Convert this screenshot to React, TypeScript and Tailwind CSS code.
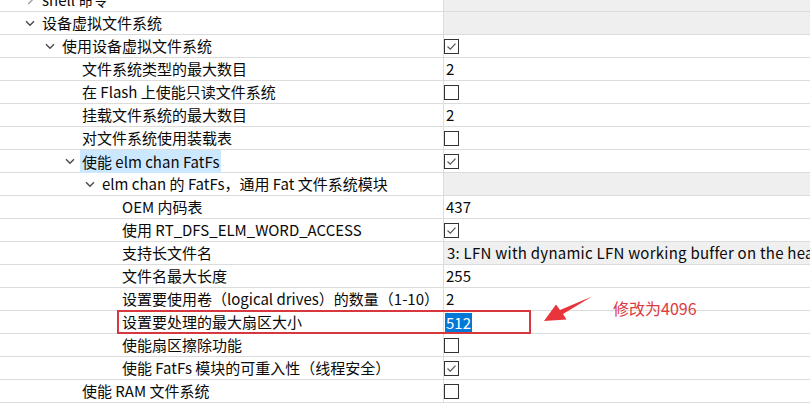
import React from 'react';

type Value =
  | { kind: 'check'; checked: boolean }
  | { kind: 'text'; text: string }
  | { kind: 'category' }
  | { kind: 'combo'; text: string }
  | { kind: 'selected'; text: string };

type Row = {
  label: string;
  level: 1 | 2 | 3 | 4 | 5;
  expander?: 'open' | 'closed';
  highlight?: boolean;
  value: Value;
};

const rows: Row[] = [
  { label: 'shell 命令', level: 1, expander: 'closed', value: { kind: 'category' } },
  { label: '设备虚拟文件系统', level: 1, expander: 'open', value: { kind: 'category' } },
  { label: '使用设备虚拟文件系统', level: 2, expander: 'open', value: { kind: 'check', checked: true } },
  { label: '文件系统类型的最大数目', level: 3, value: { kind: 'text', text: '2' } },
  { label: '在 Flash 上使能只读文件系统', level: 3, value: { kind: 'check', checked: false } },
  { label: '挂载文件系统的最大数目', level: 3, value: { kind: 'text', text: '2' } },
  { label: '对文件系统使用装载表', level: 3, value: { kind: 'check', checked: false } },
  { label: '使能 elm chan FatFs', level: 3, expander: 'open', highlight: true, value: { kind: 'check', checked: true } },
  { label: 'elm chan 的 FatFs，通用 Fat 文件系统模块', level: 4, expander: 'open', value: { kind: 'category' } },
  { label: 'OEM 内码表', level: 5, value: { kind: 'text', text: '437' } },
  { label: '使用 RT_DFS_ELM_WORD_ACCESS', level: 5, value: { kind: 'check', checked: true } },
  { label: '支持长文件名', level: 5, value: { kind: 'combo', text: '3: LFN with dynamic LFN working buffer on the heap' } },
  { label: '文件名最大长度', level: 5, value: { kind: 'text', text: '255' } },
  { label: '设置要使用卷（logical drives）的数量（1-10）', level: 5, value: { kind: 'text', text: '2' } },
  { label: '设置要处理的最大扇区大小', level: 5, value: { kind: 'selected', text: '512' } },
  { label: '使能扇区擦除功能', level: 5, value: { kind: 'check', checked: false } },
  { label: '使能 FatFs 模块的可重入性（线程安全）', level: 5, value: { kind: 'check', checked: true } },
  { label: '使能 RAM 文件系统', level: 3, value: { kind: 'check', checked: false } },
];

const indent: Record<number, string> = {
  1: 'pl-[22px]',
  2: 'pl-[42px]',
  3: 'pl-[62px]',
  4: 'pl-[82px]',
  5: 'pl-[102px]',
};

function Chevron({ open }: { open: boolean }) {
  return open ? (
    <svg width="10" height="7" viewBox="0 0 10 7" className="ml-[3px]">
      <path d="M1 1.2 L5 5.2 L9 1.2" fill="none" stroke="#4a4a4a" strokeWidth="1.4" />
    </svg>
  ) : (
    <svg width="7" height="10" viewBox="0 0 7 10" className="ml-[5px]">
      <path d="M1.2 1 L5.2 5 L1.2 9" fill="none" stroke="#a0a0a0" strokeWidth="1.4" />
    </svg>
  );
}

function CheckBox({ checked }: { checked: boolean }) {
  return (
    <span className="flex h-[15px] w-[15px] items-center justify-center border border-[#333] bg-white">
      {checked ? (
        <svg width="13" height="13" viewBox="0 0 13 13">
          <path d="M2.5 6.5 L5.3 9.2 L10.5 3.6" fill="none" stroke="#555" strokeWidth="1.2" />
        </svg>
      ) : null}
    </span>
  );
}

function ValueCell({ value }: { value: Value }) {
  if (value.kind === 'category') {
    return <div className="h-full flex-1 bg-[#efefef]" />;
  }
  if (value.kind === 'check') {
    return (
      <div className="flex h-full flex-1 items-center">
        <CheckBox checked={value.checked} />
      </div>
    );
  }
  if (value.kind === 'combo') {
    return (
      <div className="flex h-full flex-1 items-center overflow-hidden whitespace-nowrap bg-[#f0f0f0] pl-[3px] tracking-[0.25px]">
        {value.text}
      </div>
    );
  }
  if (value.kind === 'selected') {
    return (
      <div className="flex h-full flex-1 items-center pl-[1px]">
        <span className="bg-[#0078d7] px-[1px] leading-[19px] text-white">{value.text}</span>
      </div>
    );
  }
  return <div className="flex h-full flex-1 items-center pl-[2px]">{value.text}</div>;
}

export default function App() {
  return (
    <div className="relative h-[404px] w-[810px] overflow-hidden bg-white font-['Noto_Sans_CJK_SC',sans-serif] text-[15px] text-[#0a0a0a]">
      <div className="-mt-[11px]">
        {rows.map((row, i) => (
          <div key={i} className="flex h-[23px] border-b border-[#dcdcdc] leading-[22px]">
            <div className={`flex h-full w-[444px] shrink-0 items-center border-r border-[#dcdcdc] ${indent[row.level]}`}>
              <span className="flex w-[20px] shrink-0 items-center">
                {row.expander ? <Chevron open={row.expander === 'open'} /> : null}
              </span>
              <span className={`whitespace-nowrap ${row.highlight ? '-ml-[2px] bg-[#cce8ff] px-[2px] leading-[23px]' : ''}`}>
                {row.label}
              </span>
            </div>
            <ValueCell value={row.value} />
          </div>
        ))}
      </div>

      {/* annotation: red box round the sector size row */}
      <div className="absolute left-[117px] top-[310px] h-[24px] w-[414px] border-2 border-[#d8373d]" />

      {/* annotation arrow */}
      <svg className="absolute left-[540px] top-[292px]" width="56" height="34" viewBox="0 0 56 34">
        <polygon points="4,29 16,12.5 20,18 52,4.5 23,22 26.5,27.5" fill="#e8343a" />
      </svg>

      <div className="absolute left-[613px] top-[297px] whitespace-nowrap text-[16px] leading-[22px] text-[#dc3b40]">
        修改为4096
      </div>
    </div>
  );
}
